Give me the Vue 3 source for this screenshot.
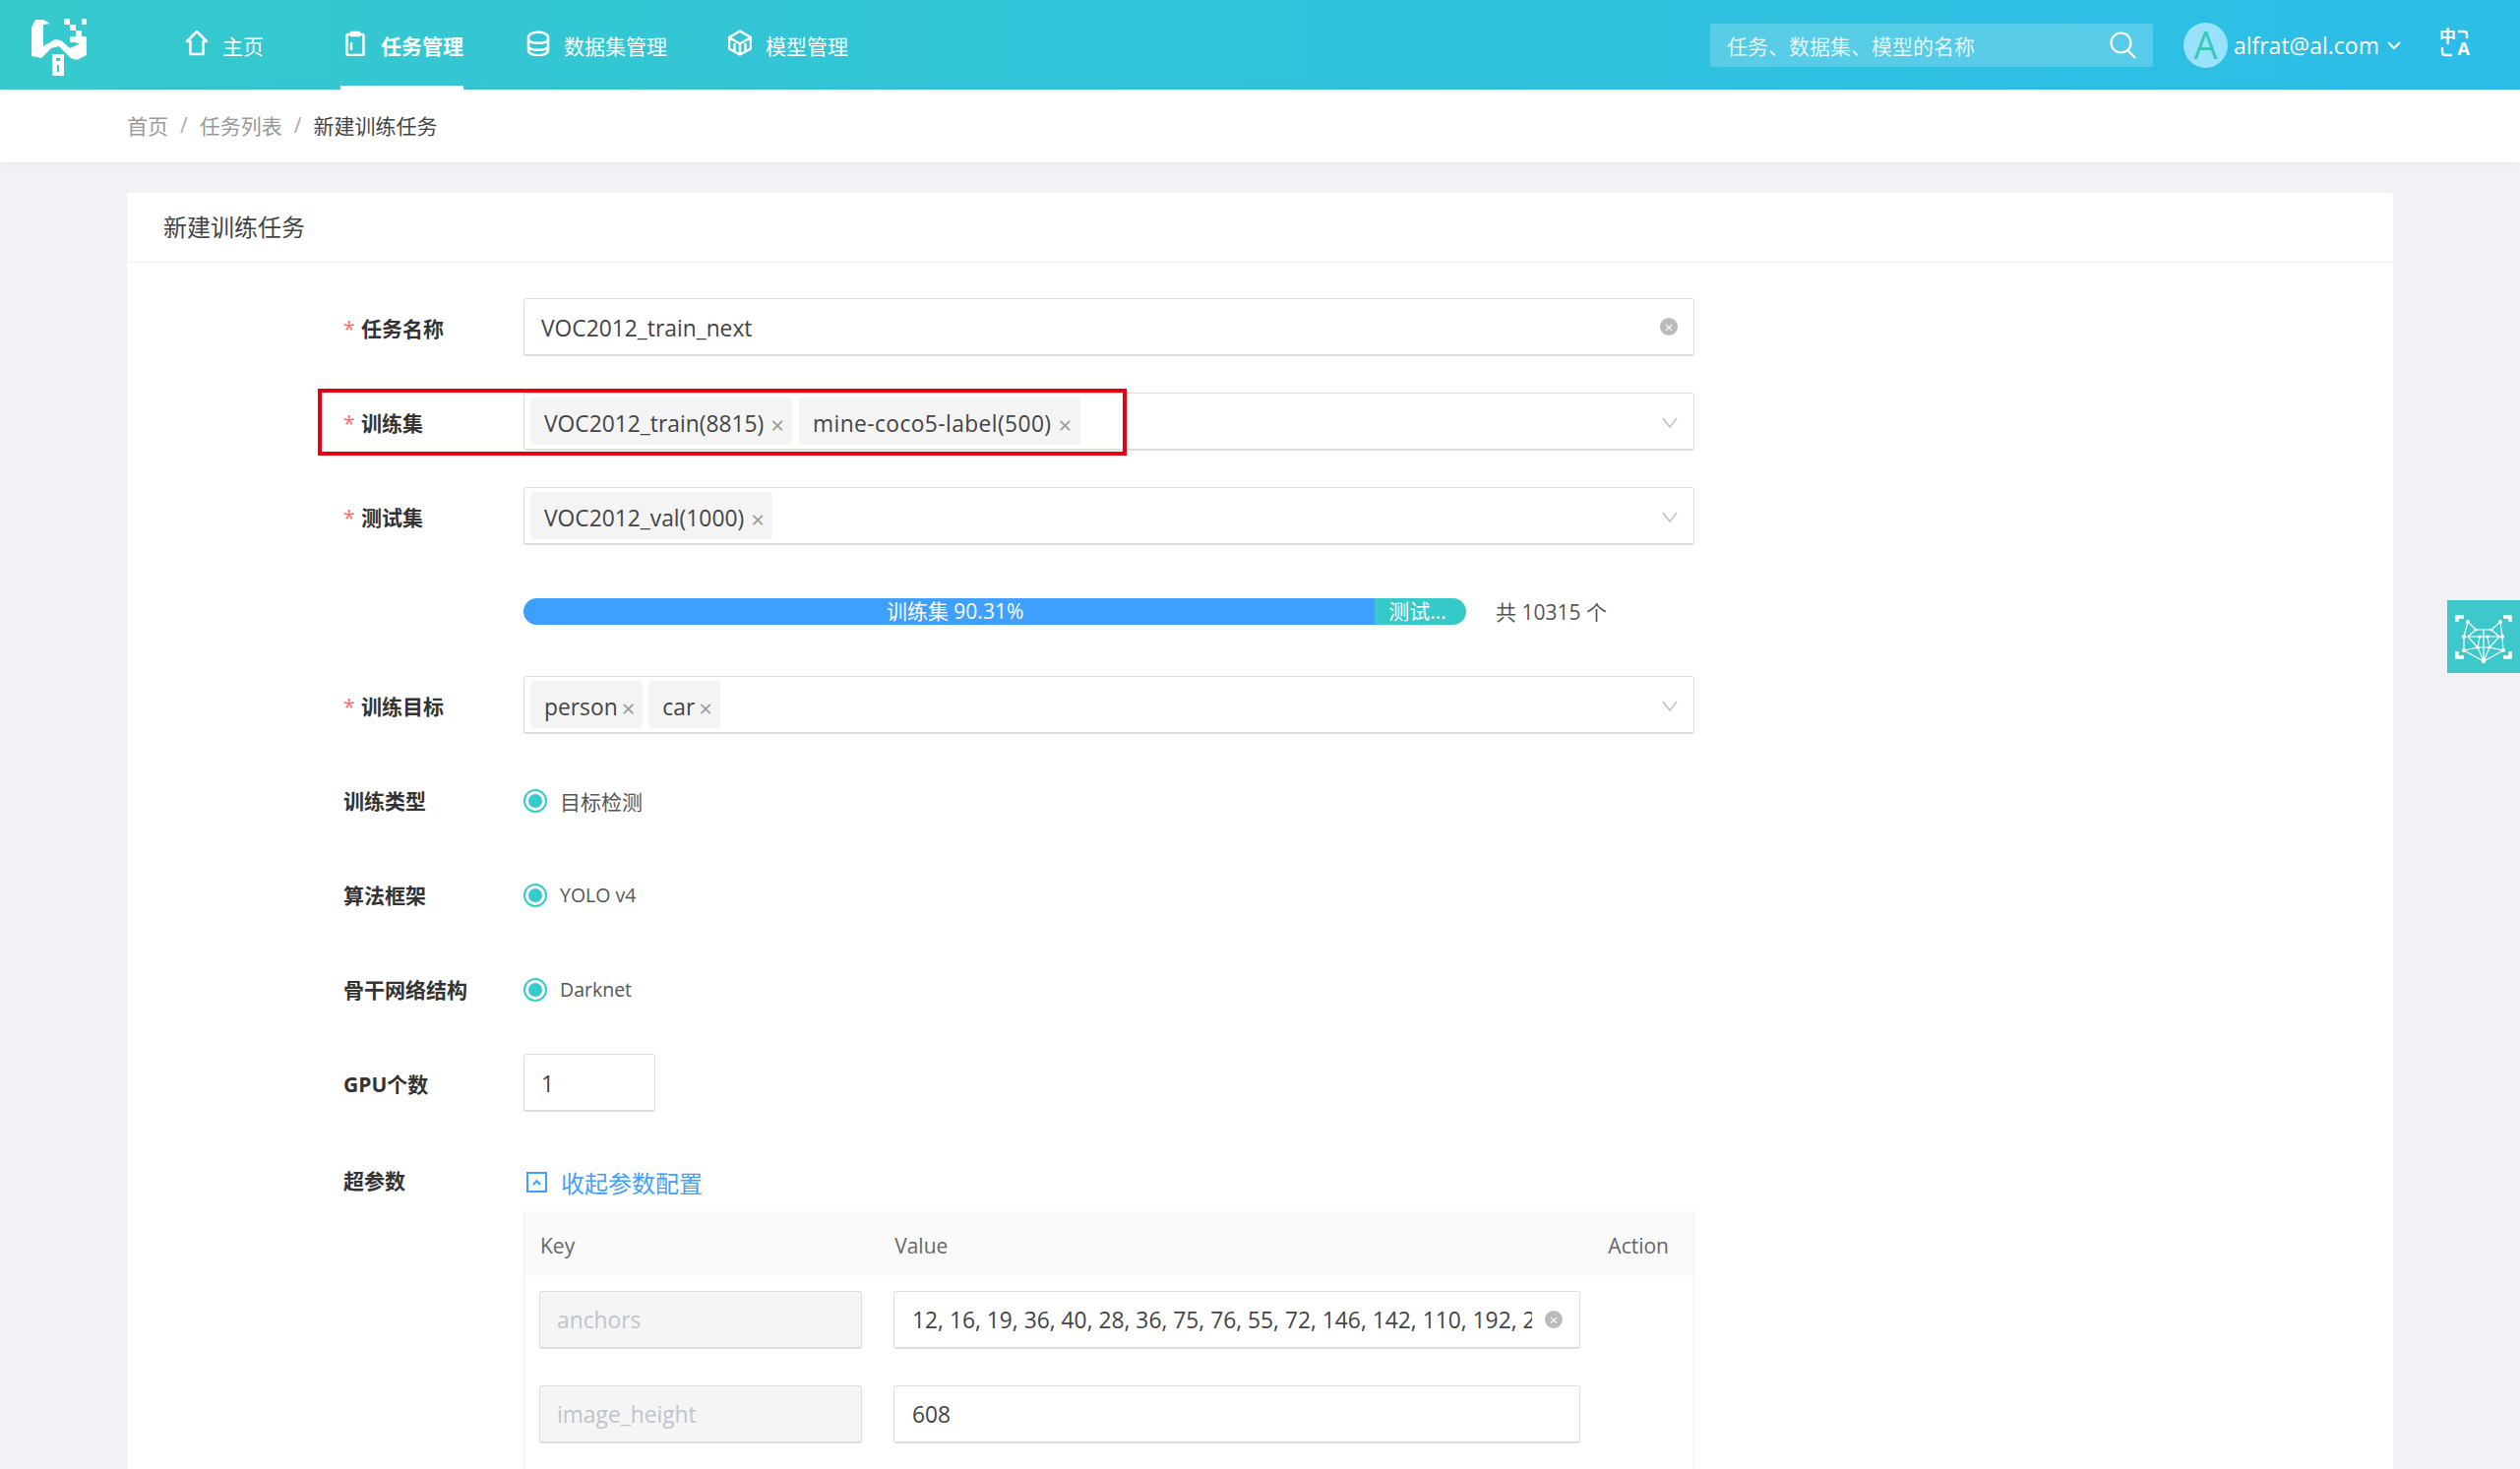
<template>
  <div class="page">
    <header class="topbar">
      <svg class="logo" viewBox="0 0 56 58" fill="#fff">
        <path d="M0 9 4 1h8l7 4-7 1v22l12-7 6 1 9 8 9-4 8-8v19l-10 5-6-2-12-12-8 2-10 10-10-2z" />
        <path d="M21 36h12v22H21z" />
        <path fill="#36c9cd" d="M25 40h4v3h-4zM26 47h2v7h-2z" />
        <path d="M33 0h6v6h-6zM51 0h5v6h-5zM39 6h6v6h-6zM45 12h6v6h-6zM39 18h6v6h-6zM45 18h11v7H45z" />
      </svg>
      <nav class="nav">
        <a v-for="item in navItems" :key="item.text" class="nav-item" :class="{ active: item.active }">
          <svg class="nav-icon" viewBox="0 0 24 27" fill="none" stroke="#fff" stroke-width="2.500" stroke-linejoin="round">
            <path v-for="d in item.paths" :key="d" :d="d" />
          </svg>
          <span>{{ item.text }}</span>
        </a>
      </nav>
      <div class="search">
        <span>任务、数据集、模型的名称</span>
        <svg class="search-icon" viewBox="0 0 27 28" fill="none" stroke="#fff" stroke-width="2.2">
          <circle cx="11.5" cy="11.5" r="10" />
          <path d="m18.5 19 7.500 8" />
        </svg>
      </div>
      <div class="avatar">A</div>
      <span class="user">alfrat@al.com</span>
      <svg class="user-arrow" viewBox="0 0 16 10" fill="none" stroke="#fff" stroke-width="2">
        <path d="m2 2 6 6 6-6" />
      </svg>
      <div class="lang">
        <span class="lang-zh">中</span>
        <span class="lang-en">A</span>
        <svg class="lang-marks" viewBox="0 0 32 29" fill="none" stroke="#fff" stroke-width="2.4">
          <path d="M19 2h6q3 0 3 3v4M3 18v5q0 3 3 3h7" />
        </svg>
      </div>
    </header>

    <div class="crumbs">
      <span>首页</span><i>/</i><span>任务列表</span><i>/</i><span class="current">新建训练任务</span>
    </div>

    <main class="main">
      <section class="card">
        <h2 class="card-title">新建训练任务</h2>
        <div class="form">
          <div class="row">
            <label class="label required">任务名称</label>
            <div class="field box">
              <span class="value">VOC2012_train_next</span>
              <span class="clear">×</span>
            </div>
          </div>

          <div v-for="row in selectRows" :key="row.label" class="row">
            <label class="label required">{{ row.label }}</label>
            <div class="field box select">
              <span v-for="tag in row.tags" :key="tag" class="tag">{{ tag }}<em>×</em></span>
              <svg class="chevron" viewBox="0 0 16 11" fill="none" stroke="#bcbcbc" stroke-width="1.4">
                <path d="m1 1 7 9 7-9" />
              </svg>
            </div>
            <div v-if="row.marked" class="mark"></div>
          </div>

          <div class="row">
            <div class="label"></div>
            <div class="split">
              <div class="split-train" :style="{ width: trainShare + '%' }">训练集 90.31%</div>
              <div class="split-test">测试...</div>
            </div>
            <span class="total">共 10315 个</span>
          </div>

          <div class="row">
            <label class="label required">训练目标</label>
            <div class="field box select compact">
              <span v-for="tag in targets" :key="tag" class="tag">{{ tag }}<em>×</em></span>
              <svg class="chevron" viewBox="0 0 16 11" fill="none" stroke="#bcbcbc" stroke-width="1.4">
                <path d="m1 1 7 9 7-9" />
              </svg>
            </div>
          </div>

          <div v-for="row in radioRows" :key="row.label" class="row">
            <label class="label">{{ row.label }}</label>
            <span class="radio"><b></b></span>
            <span class="radio-text" :class="{ latin: row.latin }">{{ row.value }}</span>
          </div>

          <div class="row">
            <label class="label">GPU个数</label>
            <div class="box gpu"><span class="value">1</span></div>
          </div>

          <div class="row hyper">
            <label class="label hyper-label">超参数</label>
            <div class="hyper-body">
              <a class="collapse">
                <svg viewBox="0 0 21 21" fill="none" stroke="#3f9ffc" stroke-width="2">
                  <path d="M1 1h19v19H1zM7 13l3.500-4 3.500 4" />
                </svg>
                收起参数配置
              </a>
              <div class="table">
                <div class="thead">
                  <span class="col-key">Key</span>
                  <span class="col-value">Value</span>
                  <span class="col-action">Action</span>
                </div>
                <div v-for="param in params" :key="param.key" class="tr">
                  <div class="box key-input">{{ param.key }}</div>
                  <div class="box value-input">
                    <span class="value clip">{{ param.value }}</span>
                    <span v-if="param.clear" class="clear">×</span>
                  </div>
                </div>
              </div>
            </div>
          </div>
        </div>
      </section>
    </main>

    <aside class="float-tab">
      <svg viewBox="0 0 74 74" fill="none" stroke="#fff" stroke-width="1.200">
        <path stroke-width="3.500" d="M10 22v-5h7M57 17h7v5M10 52v6h7M57 58h7v-6" />
        <path d="M21 22l8 8h16l9-8 2 15 1 14-20 11-20-11 0-14z" />
        <path d="M17 37h39M29 30l-8 7 10 11 6 14 6-14 10-11-8-7M33 37l-2 11h12l-2-11M37 30v32M17 51l14-3M43 48l14 3" />
        <g fill="#fff" stroke="none">
          <circle cx="21" cy="22" r="2" /><circle cx="54" cy="22" r="2" />
          <circle cx="29" cy="30" r="1.600" /><circle cx="45" cy="30" r="1.600" />
          <circle cx="17" cy="37" r="2" /><circle cx="56" cy="37" r="2" />
          <circle cx="33" cy="37" r="1.600" /><circle cx="41" cy="37" r="1.600" />
          <circle cx="17" cy="51" r="2" /><circle cx="57" cy="51" r="2" />
          <circle cx="31" cy="48" r="1.600" /><circle cx="43" cy="48" r="1.600" />
          <circle cx="37" cy="62" r="2.200" />
        </g>
      </svg>
    </aside>
  </div>
</template>

<script setup>
const trainShare = 90.31

const navItems = [
  { text: '主页', paths: ['M12 2 2 12h3.500v13h13V12H22z'] },
  { text: '任务管理', active: true, paths: ['M3.500 6q0-1 1-1h15q1 0 1 1v19q0 1-1 1h-15q-1 0-1-1zM8 3h8v3H8zM8 13v8'] },
  { text: '数据集管理', paths: ['M2 8c0-7 20-7 20 0v13c0 7-20 7-20 0zM2 10c0 5 20 5 20 0M2 17c0 5 20 5 20 0'] },
  { text: '模型管理', paths: ['M12 1.500 23 8v11.500L12 25.500 1 19.500V8zM1 8l11 6.500L23 8M12 14.500v11M6.500 14v8M17.500 14v8'] }
]

const selectRows = [
  { label: '训练集', tags: ['VOC2012_train(8815)', 'mine-coco5-label(500)'], marked: true },
  { label: '测试集', tags: ['VOC2012_val(1000)'] }
]

const targets = ['person', 'car']

const radioRows = [
  { label: '训练类型', value: '目标检测' },
  { label: '算法框架', value: 'YOLO v4', latin: true },
  { label: '骨干网络结构', value: 'Darknet', latin: true }
]

const params = [
  { key: 'anchors', value: '12, 16, 19, 36, 40, 28, 36, 75, 76, 55, 72, 146, 142, 110, 192, 243, 459, 401', clear: true },
  { key: 'image_height', value: '608' }
]
</script>

<style>
html,
body {
  margin: 0;
  overflow: hidden;
}
</style>

<style scoped>
.page {
  position: relative;
  height: 1493px;
  overflow: hidden;
  background: #f0f2f5;
  color: #444;
  font-family: "Open Sans", "Noto Sans CJK SC", sans-serif;
  font-size: 21px;
}

.topbar {
  display: flex;
  align-items: center;
  height: 91px;
  padding-left: 32px;
  box-sizing: border-box;
  background: linear-gradient(90deg, #36c9cd, #2cbde8);
  color: #fff;
}

.logo {
  width: 56px;
  height: 58px;
  margin-top: 5px;
  flex: none;
}

.nav {
  display: flex;
  height: 100%;
  margin-left: 100px;
}

.nav-item {
  display: flex;
  align-items: center;
  gap: 14px;
  height: 100%;
  box-sizing: border-box;
  margin-right: 62px;
  border-bottom: 4px solid transparent;
}

.nav-item:first-child {
  margin-right: 78px;
}

.nav-item.active {
  padding-left: 3px;
  margin-right: 64px;
  font-weight: 700;
  border-bottom-color: #fff;
}

.nav-item span {
  margin-top: 4px;
}

.nav-icon {
  width: 24px;
  height: 27px;
}

.search {
  display: flex;
  align-items: center;
  justify-content: space-between;
  width: 450px;
  height: 44px;
  box-sizing: border-box;
  padding: 0 17px;
  margin-left: auto;
  border-radius: 3px;
  background: rgba(255, 255, 255, 0.2);
  color: rgba(255, 255, 255, 0.85);
}

.search-icon {
  width: 27px;
  height: 28px;
}

.avatar {
  width: 45px;
  height: 46px;
  margin-left: 31px;
  border-radius: 50%;
  background: #99e2fb;
  color: #35c9b5;
  font-size: 38px;
  line-height: 44px;
  text-align: center;
}

.user {
  margin-left: 6px;
  font-size: 23px;
}

.user-arrow {
  width: 16px;
  height: 10px;
  margin-left: 7px;
}

.lang {
  position: relative;
  width: 32px;
  height: 29px;
  margin: 0 50px 3px 38px;
  font-weight: 700;
  line-height: 1;
}

.lang-zh {
  position: absolute;
  left: 0;
  top: -2px;
  font-size: 17px;
}

.lang-en {
  position: absolute;
  right: 1px;
  bottom: 1px;
  font-size: 18px;
}

.lang-marks {
  position: absolute;
  inset: 0;
}

.crumbs {
  display: flex;
  align-items: center;
  height: 74px;
  box-sizing: border-box;
  padding: 0 0 2px 129px;
  background: #fff;
  color: #999;
  box-shadow: 0 2px 10px rgba(0, 0, 0, 0.04);
}

.crumbs i {
  margin: 0 12px;
  font-style: normal;
  color: #aaa;
}

.crumbs .current {
  color: #444;
}

.main {
  padding: 31px 129px 0;
}

.card {
  min-height: 1400px;
  background: #fff;
  border-radius: 2px;
}

.card-title {
  height: 70px;
  margin: 0;
  padding-left: 37px;
  border-bottom: 1px solid #f2f2f2;
  color: #444;
  font-size: 24px;
  font-weight: 400;
  line-height: 70px;
}

.form {
  padding: 36px 0 0 220px;
}

.row {
  position: relative;
  display: flex;
  align-items: center;
  height: 59px;
  margin-bottom: 37px;
}

.label {
  flex: none;
  width: 183px;
  color: #333;
  font-weight: 700;
}

.label.required::before {
  content: "*";
  display: inline-block;
  width: 18px;
  color: #f56c6c;
  font-weight: 400;
}

.box {
  display: flex;
  align-items: center;
  box-sizing: border-box;
  height: 59px;
  border: 1px solid #dedede;
  border-bottom-width: 2px;
  border-radius: 3px;
  background: #fff;
}

.field {
  width: 1190px;
  padding: 0 17px;
}

.select {
  padding: 0 6px;
  gap: 7px;
}

.value {
  color: #444;
  font-size: 22.8px;
}

.field .value,
.gpu .value {
  margin-top: 2px;
}

.clear {
  display: flex;
  align-items: center;
  justify-content: center;
  flex: none;
  width: 18px;
  height: 18px;
  margin-left: auto;
  border-radius: 50%;
  background: #bbb;
  color: #fff;
  font-size: 15px;
  line-height: 1;
}

.field .clear {
  margin-right: -1px;
}

.tag {
  display: flex;
  align-items: center;
  height: 48px;
  box-sizing: border-box;
  padding: 5px 8px 0 14px;
  border-radius: 3px;
  background: #f4f4f5;
  color: #444;
  font-size: 22.8px;
  white-space: nowrap;
}

.tag + .tag {
  letter-spacing: 0.4px;
}

.tag em {
  margin: 2px 0 0 7px;
  color: #999;
  font-size: 24px;
  font-style: normal;
  line-height: 1;
}

.compact {
  gap: 6px;
}

.compact .tag + .tag {
  letter-spacing: 0;
}

.compact .tag em {
  margin-left: 4px;
}

.chevron {
  width: 16px;
  height: 11px;
  margin: 2px 10px 0 auto;
}

.mark {
  position: absolute;
  left: -26px;
  top: -4px;
  width: 822px;
  height: 68px;
  box-sizing: border-box;
  border: 4px solid #e60012;
  pointer-events: none;
}

.split {
  display: flex;
  width: 958px;
  height: 27px;
  margin-top: 1px;
  overflow: hidden;
  border-radius: 14px;
  color: #fff;
  line-height: 27px;
  text-align: center;
  white-space: nowrap;
}

.split-train {
  box-sizing: border-box;
  padding-left: 12px;
  background: #3f9ffc;
}

.split-test {
  flex: 1;
  background: #36c9c9;
  text-align: left;
  padding-left: 14px;
}

.total {
  margin-left: 30px;
  color: #555;
}

.radio {
  display: flex;
  align-items: center;
  justify-content: center;
  flex: none;
  width: 24px;
  height: 24px;
  box-sizing: border-box;
  margin-top: 2px;
  border: 2px solid #36c9cd;
  border-radius: 50%;
}

.radio b {
  width: 14px;
  height: 14px;
  border-radius: 50%;
  background: #36c9cd;
}

.radio-text {
  margin: 2px 0 0 13px;
  color: #555;
}

.radio-text.latin {
  font-size: 19.5px;
}

.gpu {
  width: 134px;
  padding-left: 17px;
}

.hyper {
  align-items: flex-start;
  height: auto;
  margin: 0;
}

.hyper-label {
  margin-top: 17px;
}

.hyper-body {
  width: 1190px;
}

.collapse {
  display: flex;
  align-items: center;
  gap: 14px;
  height: 64px;
  padding: 4px 0 0 3px;
  box-sizing: border-box;
  color: #3f9ffc;
  font-size: 24px;
}

.collapse svg {
  width: 21px;
  height: 21px;
}

.table {
  min-height: 400px;
  border: solid #f0f0f0;
  border-width: 0 1px;
}

.thead {
  display: flex;
  align-items: center;
  height: 66px;
  box-sizing: border-box;
  padding-top: 3px;
  background: #fafafa;
  color: #666;
}

.col-key {
  margin-left: 16px;
}

.col-value {
  margin-left: 325px;
}

.col-action {
  margin-left: auto;
  margin-right: 25px;
}

.tr {
  display: flex;
  gap: 32px;
  height: 96px;
  padding: 15px 0 0 15px;
  box-sizing: border-box;
}

.key-input {
  width: 328px;
  padding-left: 17px;
  background: #f5f5f5;
  color: #c0c4cc;
  font-size: 22.8px;
}

.value-input {
  width: 698px;
  padding: 0 17px 0 18px;
}

.clip {
  width: 630px;
  overflow: hidden;
  white-space: nowrap;
}

.float-tab {
  position: absolute;
  right: 0;
  top: 610px;
  width: 74px;
  height: 74px;
  background: #3ec8cb;
}

.float-tab svg {
  display: block;
}
</style>
